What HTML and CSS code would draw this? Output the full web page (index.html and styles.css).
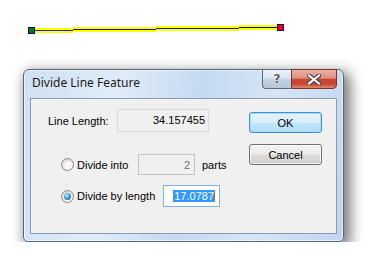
FILE: index.html
```html
<!DOCTYPE html>
<html lang="en">
<head>
  <meta charset="UTF-8">
  <meta name="viewport" content="width=device-width, initial-scale=1.0">
  <title>Divide Line Feature</title>
  <link rel="stylesheet" href="styles.css">
</head>
<body>

  <!-- the selected polyline on the map -->
  <svg class="feature-line" width="377" height="44" viewBox="0 0 377 44" shape-rendering="crispEdges">
    <rect x="35" y="28" width="38" height="5" fill="#ffff00"/>
    <rect x="73" y="27" width="83" height="5" fill="#ffff00"/>
    <rect x="156" y="26" width="83" height="5" fill="#ffff00"/>
    <rect x="239" y="25" width="38" height="5" fill="#ffff00"/>
    <rect x="35" y="30" width="38" height="1" fill="#2626b8"/>
    <rect x="73" y="29" width="83" height="1" fill="#14145c"/>
    <rect x="156" y="28" width="83" height="1" fill="#1c1c8a"/>
    <rect x="239" y="27" width="38" height="1" fill="#14145c"/>
    <rect x="28.5" y="27.5" width="6" height="6" fill="#008000" stroke="#000080" stroke-width="1"/>
    <rect x="277.5" y="24.5" width="6" height="6" fill="#ff0000" stroke="#000080" stroke-width="1"/>
  </svg>

  <div class="dialog">
    <div class="titlebar">
      <span class="title">Divide Line Feature</span>
      <div class="caption-buttons">
        <span class="cap-btn help">?</span>
        <span class="cap-btn close">
          <svg width="14" height="11" viewBox="0 0 14 11">
            <path d="M2 1.5 L12 9.5 M12 1.5 L2 9.5" stroke="#3d3d3d" stroke-width="4.2" stroke-linecap="square"/>
            <path d="M2 1.5 L12 9.5 M12 1.5 L2 9.5" stroke="#ffffff" stroke-width="2.2" stroke-linecap="square"/>
          </svg>
        </span>
      </div>
    </div>

    <div class="client">
      <div class="fields">
        <div class="length-row">
          <span class="label">Line Length:</span>
          <span class="static-box">34.157455</span>
        </div>
        <div class="option">
          <span class="radio"></span>
          <span class="opt-label into">Divide into</span>
          <span class="edit disabled">2</span>
          <span class="unit">parts</span>
        </div>
        <div class="option by-length">
          <span class="radio checked"></span>
          <span class="opt-label length">Divide by length</span>
          <span class="edit focused"><span class="sel">17.0787<span class="caret"></span></span></span>
        </div>
      </div>
      <div class="buttons">
        <button class="btn default">OK</button>
        <button class="btn">Cancel</button>
      </div>
    </div>
  </div>

</body>
</html>
```

FILE: styles.css
```css
body {
  margin: 0;
  background: #ffffff;
  font-family: 'Liberation Sans', Arial, sans-serif;
  font-size: 11px;
  color: #000;
}

.feature-line {
  display: block;
}

/* Fenetre du dialogue (cadre vitre bleu) */
.dialog {
  width: 321px;
  box-sizing: border-box;
  margin: 25px 0 0 23px;
  padding: 0 6px 7px;
  border: 1px solid #56647a;
  border-radius: 6px 6px 5px 5px;
  background: linear-gradient(100deg, #cfe0f3 0%, #e0ecf8 28%, #c4daf1 52%, #d6e5f5 74%, #bfd5ee 100%);
  box-shadow: 4px 5px 14px 2px rgba(0, 0, 0, 0.55), inset 0 0 0 1px rgba(255, 255, 255, 0.6);
}

.titlebar {
  display: flex;
  justify-content: space-between;
  align-items: flex-start;
  height: 28px;
}

.title {
  padding: 6px 0 0 2px;
  font-family: 'Noto Sans', sans-serif;
  font-size: 12px;
  line-height: 14px;
  color: #1a1a1a;
}

.caption-buttons {
  display: flex;
  margin-top: -1px;
}

.cap-btn {
  display: flex;
  align-items: center;
  justify-content: center;
  height: 20px;
  box-sizing: border-box;
  border: 1px solid #5b6a80;
}

.help {
  width: 29px;
  border-right: none;
  border-radius: 0 0 0 4px;
  background: linear-gradient(#eef3f9 0%, #dbe5f0 45%, #c3d1e1 55%, #b6c7da 100%);
  font-family: 'DejaVu Sans', sans-serif;
  font-weight: bold;
  font-size: 12px;
  color: #5a5a5a;
  text-shadow: 0 0 1px #fff, 0 0 1px #fff, 0 0 1px #fff;
}

.close {
  width: 46px;
  border-color: #7a3128;
  border-radius: 0 0 4px 0;
  background: linear-gradient(#eab0a4 0%, #df8e80 45%, #c84634 52%, #c94533 78%, #e2896a 100%);
}

/* Zone client */
.client {
  display: flex;
  height: 136px;
  box-sizing: border-box;
  border: 1px solid #8b9cb2;
  background: #f0f0f0;
}

.fields {
  flex: 1;
  padding: 10px 0 0 17px;
}

.length-row {
  display: flex;
  align-items: center;
  height: 23px;
}

.label {
  width: 69px;
}

.static-box {
  width: 92px;
  height: 23px;
  box-sizing: border-box;
  border: 1px solid #d9d9d9;
  padding-right: 3px;
  text-align: right;
  line-height: 20px;
}

.option {
  display: flex;
  align-items: center;
  height: 21px;
  margin: 22px 0 0 13px;
}

.option.by-length {
  height: 22px;
  margin-top: 10px;
}

.radio {
  width: 13px;
  height: 13px;
  box-sizing: border-box;
  margin-right: 3px;
  border: 1px solid #8a8a8a;
  border-radius: 50%;
  background: radial-gradient(circle at 60% 65%, #f6f6f6 0 35%, #dadada 70%, #b9b9b9 100%);
  display: flex;
  align-items: center;
  justify-content: center;
}

.radio.checked::after {
  content: '';
  width: 7px;
  height: 7px;
  border-radius: 50%;
  background: radial-gradient(circle at 40% 35%, #8fdcfb 0 15%, #2f8fd0 55%, #1b4f86 100%);
}

.opt-label.into {
  width: 61px;
}

.opt-label.length {
  width: 86px;
}

.edit {
  width: 57px;
  height: 100%;
  box-sizing: border-box;
  padding-right: 4px;
  text-align: right;
  display: flex;
  align-items: center;
  justify-content: flex-end;
}

.edit.disabled {
  border: 1px solid #c4c4c4;
  color: #6d6d6d;
}

.edit.focused {
  border: 1px solid #7eb4ea;
  background: #ffffff;
}

.sel {
  display: flex;
  line-height: 12px;
  padding-left: 1px;
  background: #3399ff;
  color: #ffffff;
}

.caret {
  width: 1px;
  background: #cc6a00;
}

.unit {
  margin-left: 7px;
}

/* Boutons OK / Annuler */
.buttons {
  width: 73px;
  margin-right: 14px;
  padding-top: 13px;
  display: flex;
  flex-direction: column;
  gap: 11px;
}

.btn {
  height: 21px;
  padding: 0;
  font: inherit;
  color: #000;
  border: 1px solid #707070;
  border-radius: 3px;
  background: linear-gradient(#f2f2f2 0%, #ebebeb 48%, #dddddd 52%, #cfcfcf 100%);
  box-shadow: inset 0 0 0 1px rgba(255, 255, 255, 0.7);
}

.btn.default {
  border-color: #3c8fd8;
  background: linear-gradient(#e6f4fc 0%, #d8eefb 48%, #c3e5f8 52%, #b1dbf3 100%);
  box-shadow: inset 0 0 0 1px #9fe0f8;
}
```
